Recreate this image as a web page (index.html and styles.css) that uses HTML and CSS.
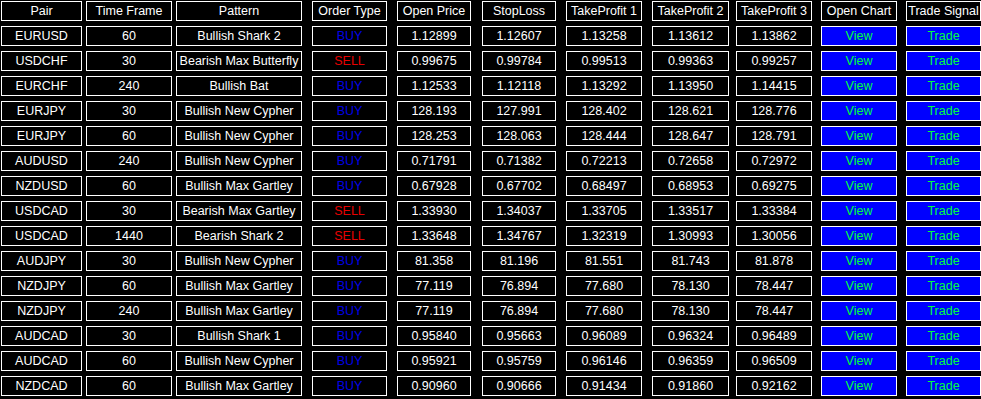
FILE: index.html
```html
<!DOCTYPE html>
<html>
<head>
<meta charset="utf-8">
<link rel="stylesheet" href="styles.css">
</head>
<body>
<div class="panel">
  <div class="row">
    <div class="cell c1">Pair</div><div class="cell c2">Time Frame</div><div class="cell c3">Pattern</div><div class="cell c4">Order Type</div><div class="cell c5">Open Price</div><div class="cell c6">StopLoss</div><div class="cell c7">TakeProfit 1</div><div class="cell c8">TakeProfit 2</div><div class="cell c9">TakeProfit 3</div><div class="cell c10">Open Chart</div><div class="cell c11">Trade Signal</div>
  </div>
  <div class="row"><div class="cell c1">EURUSD</div><div class="cell c2">60</div><div class="cell c3">Bullish Shark 2</div><div class="cell c4 buy">BUY</div><div class="cell c5">1.12899</div><div class="cell c6">1.12607</div><div class="cell c7">1.13258</div><div class="cell c8">1.13612</div><div class="cell c9">1.13862</div><div class="cell c10 btn">View</div><div class="cell c11 btn">Trade</div></div>
  <div class="row"><div class="cell c1">USDCHF</div><div class="cell c2">30</div><div class="cell c3">Bearish Max Butterfly</div><div class="cell c4 sell">SELL</div><div class="cell c5">0.99675</div><div class="cell c6">0.99784</div><div class="cell c7">0.99513</div><div class="cell c8">0.99363</div><div class="cell c9">0.99257</div><div class="cell c10 btn">View</div><div class="cell c11 btn">Trade</div></div>
  <div class="row"><div class="cell c1">EURCHF</div><div class="cell c2">240</div><div class="cell c3">Bullish Bat</div><div class="cell c4 buy">BUY</div><div class="cell c5">1.12533</div><div class="cell c6">1.12118</div><div class="cell c7">1.13292</div><div class="cell c8">1.13950</div><div class="cell c9">1.14415</div><div class="cell c10 btn">View</div><div class="cell c11 btn">Trade</div></div>
  <div class="row"><div class="cell c1">EURJPY</div><div class="cell c2">30</div><div class="cell c3">Bullish New Cypher</div><div class="cell c4 buy">BUY</div><div class="cell c5">128.193</div><div class="cell c6">127.991</div><div class="cell c7">128.402</div><div class="cell c8">128.621</div><div class="cell c9">128.776</div><div class="cell c10 btn">View</div><div class="cell c11 btn">Trade</div></div>
  <div class="row"><div class="cell c1">EURJPY</div><div class="cell c2">60</div><div class="cell c3">Bullish New Cypher</div><div class="cell c4 buy">BUY</div><div class="cell c5">128.253</div><div class="cell c6">128.063</div><div class="cell c7">128.444</div><div class="cell c8">128.647</div><div class="cell c9">128.791</div><div class="cell c10 btn">View</div><div class="cell c11 btn">Trade</div></div>
  <div class="row"><div class="cell c1">AUDUSD</div><div class="cell c2">240</div><div class="cell c3">Bullish New Cypher</div><div class="cell c4 buy">BUY</div><div class="cell c5">0.71791</div><div class="cell c6">0.71382</div><div class="cell c7">0.72213</div><div class="cell c8">0.72658</div><div class="cell c9">0.72972</div><div class="cell c10 btn">View</div><div class="cell c11 btn">Trade</div></div>
  <div class="row"><div class="cell c1">NZDUSD</div><div class="cell c2">60</div><div class="cell c3">Bullish Max Gartley</div><div class="cell c4 buy">BUY</div><div class="cell c5">0.67928</div><div class="cell c6">0.67702</div><div class="cell c7">0.68497</div><div class="cell c8">0.68953</div><div class="cell c9">0.69275</div><div class="cell c10 btn">View</div><div class="cell c11 btn">Trade</div></div>
  <div class="row"><div class="cell c1">USDCAD</div><div class="cell c2">30</div><div class="cell c3">Bearish Max Gartley</div><div class="cell c4 sell">SELL</div><div class="cell c5">1.33930</div><div class="cell c6">1.34037</div><div class="cell c7">1.33705</div><div class="cell c8">1.33517</div><div class="cell c9">1.33384</div><div class="cell c10 btn">View</div><div class="cell c11 btn">Trade</div></div>
  <div class="row"><div class="cell c1">USDCAD</div><div class="cell c2">1440</div><div class="cell c3">Bearish Shark 2</div><div class="cell c4 sell">SELL</div><div class="cell c5">1.33648</div><div class="cell c6">1.34767</div><div class="cell c7">1.32319</div><div class="cell c8">1.30993</div><div class="cell c9">1.30056</div><div class="cell c10 btn">View</div><div class="cell c11 btn">Trade</div></div>
  <div class="row"><div class="cell c1">AUDJPY</div><div class="cell c2">30</div><div class="cell c3">Bullish New Cypher</div><div class="cell c4 buy">BUY</div><div class="cell c5">81.358</div><div class="cell c6">81.196</div><div class="cell c7">81.551</div><div class="cell c8">81.743</div><div class="cell c9">81.878</div><div class="cell c10 btn">View</div><div class="cell c11 btn">Trade</div></div>
  <div class="row"><div class="cell c1">NZDJPY</div><div class="cell c2">60</div><div class="cell c3">Bullish Max Gartley</div><div class="cell c4 buy">BUY</div><div class="cell c5">77.119</div><div class="cell c6">76.894</div><div class="cell c7">77.680</div><div class="cell c8">78.130</div><div class="cell c9">78.447</div><div class="cell c10 btn">View</div><div class="cell c11 btn">Trade</div></div>
  <div class="row"><div class="cell c1">NZDJPY</div><div class="cell c2">240</div><div class="cell c3">Bullish Max Gartley</div><div class="cell c4 buy">BUY</div><div class="cell c5">77.119</div><div class="cell c6">76.894</div><div class="cell c7">77.680</div><div class="cell c8">78.130</div><div class="cell c9">78.447</div><div class="cell c10 btn">View</div><div class="cell c11 btn">Trade</div></div>
  <div class="row"><div class="cell c1">AUDCAD</div><div class="cell c2">30</div><div class="cell c3">Bullish Shark 1</div><div class="cell c4 buy">BUY</div><div class="cell c5">0.95840</div><div class="cell c6">0.95663</div><div class="cell c7">0.96089</div><div class="cell c8">0.96324</div><div class="cell c9">0.96489</div><div class="cell c10 btn">View</div><div class="cell c11 btn">Trade</div></div>
  <div class="row"><div class="cell c1">AUDCAD</div><div class="cell c2">60</div><div class="cell c3">Bullish New Cypher</div><div class="cell c4 buy">BUY</div><div class="cell c5">0.95921</div><div class="cell c6">0.95759</div><div class="cell c7">0.96146</div><div class="cell c8">0.96359</div><div class="cell c9">0.96509</div><div class="cell c10 btn">View</div><div class="cell c11 btn">Trade</div></div>
  <div class="row"><div class="cell c1">NZDCAD</div><div class="cell c2">60</div><div class="cell c3">Bullish Max Gartley</div><div class="cell c4 buy">BUY</div><div class="cell c5">0.90960</div><div class="cell c6">0.90666</div><div class="cell c7">0.91434</div><div class="cell c8">0.91860</div><div class="cell c9">0.92162</div><div class="cell c10 btn">View</div><div class="cell c11 btn">Trade</div></div>
</div>
</body>
</html>
```
FILE: styles.css
```css
html, body {
  margin: 0;
  padding: 0;
  background: #000;
}
body {
  font-family: "Liberation Sans", Arial, sans-serif;
  font-size: 12.5px;
  color: #fff;
}
.panel {
  display: flex;
  flex-direction: column;
  gap: 5px;
  padding: 1px 0 0 1px;
}
.row {
  display: flex;
}
.cell {
  box-sizing: border-box;
  height: 20px;
  border: 1px solid #fff;
  background: #000;
  display: flex;
  align-items: center;
  justify-content: center;
  white-space: nowrap;
  overflow: hidden;
  line-height: 18px;
}
.c1 { width: 81px; }
.c2 { width: 86px; margin-left: 4px; }
.c3 { width: 126px; margin-left: 4px; }
.c4 { width: 75px; margin-left: 10px; }
.c5 { width: 74px; margin-left: 10px; }
.c6 { width: 74px; margin-left: 11px; }
.c7 { width: 76px; margin-left: 10px; }
.c8 { width: 77px; margin-left: 10px; }
.c9 { width: 76px; margin-left: 7px; }
.c10 { width: 76px; margin-left: 9px; }
.c11 { width: 75px; margin-left: 9px; }
.buy { color: #0000e8; }
.sell { color: #e80000; }
.btn {
  background: #0000ff;
  color: #00ff40;
}
```
